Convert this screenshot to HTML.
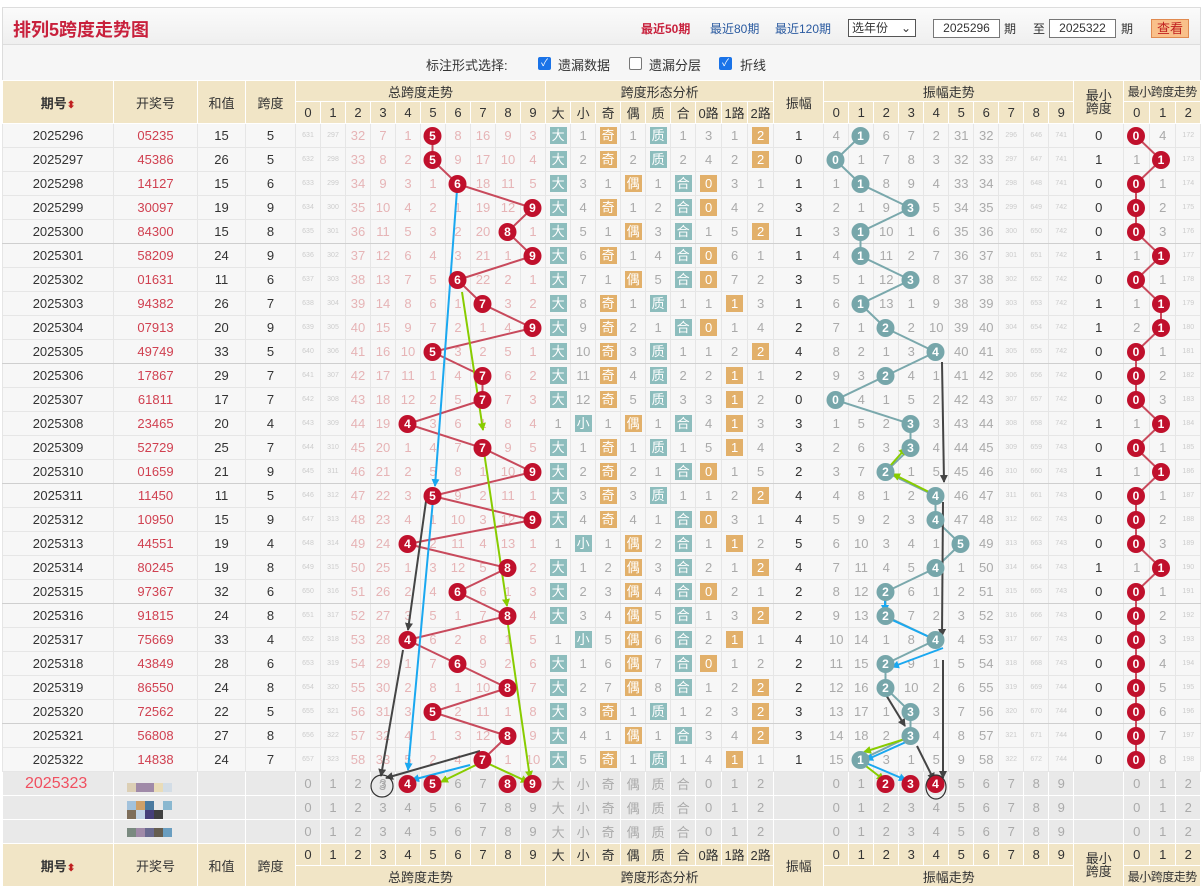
<!DOCTYPE html>
<html><head><meta charset="utf-8">
<style>
*{margin:0;padding:0;box-sizing:border-box}
body{width:1203px;height:892px;overflow:hidden;background:#fff;font-family:"Liberation Sans","Noto Sans CJK SC",sans-serif;font-size:13px;color:#333;position:relative}
#top{position:absolute;left:2px;top:7px;width:1199px;height:38px;background:linear-gradient(#fbfbfb,#efefef);border:1px solid #ddd}
#title{position:absolute;left:10px;top:8px;font-size:18px;font-weight:bold;color:#c8203c}
#ctl{position:absolute;top:12px;font-size:12px}
#opt{position:absolute;left:2px;top:45px;width:1199px;height:36px;background:#f6f6f6;border-left:1px solid #ddd;border-right:1px solid #ddd}
table{position:absolute;left:2px;top:80px;border-collapse:collapse;table-layout:fixed;width:1198px}
td{padding:0;text-align:center;height:24px;border:1px solid #e6e6e6;background:#f7f7f7;white-space:nowrap;overflow:hidden;color:#aaa;font-size:13px}
tr.h td{background:#f1e5c6;color:#333;border:1px solid #fff;height:21px}
tr.h2 td{height:22px}
td.k{color:#333}td.r{color:#d04050}
td.p{color:#e6b4b6}
td.t{font-size:7px;color:#ccc}
td.sm{font-size:12px;letter-spacing:-0.5px}
tr.s td{border-bottom:1px solid #cfcfcf}
tr.pr td{background:#e9e9e9;color:#aaa;border-color:#fff}
.T,.O{display:inline-block;width:17px;height:17px;line-height:17px;color:#fff;font-size:13px;vertical-align:middle}
.T{background:#8dbdbd}.O{background:#e2b06a}
svg{position:absolute;left:0;top:0}
svg text{font-family:"Liberation Sans",sans-serif;font-weight:bold;font-size:12px;fill:#fff;text-anchor:middle}
.mz{position:absolute;width:9px;height:9px}
</style></head><body>
<div id="top"><div id="title">排列5跨度走势图</div>
<div id="ctl" style="left:638px;color:#c8203c;font-weight:bold">最近50期</div>
<div id="ctl" style="left:707px;color:#2a5aa0">最近80期</div>
<div id="ctl" style="left:772px;color:#2a5aa0">最近120期</div>
<div style="position:absolute;left:845px;top:11px;width:68px;height:18px;border:1px solid #555;background:#fff;font-size:12px;padding-left:3px;line-height:16px">选年份 <span style="position:absolute;right:4px">⌄</span></div>
<div style="position:absolute;left:930px;top:11px;width:67px;height:19px;border:1px solid #777;background:#fff;font-size:12px;text-align:center;line-height:17px">2025296</div>
<div id="ctl" style="left:1001px">期</div><div id="ctl" style="left:1030px">至</div>
<div style="position:absolute;left:1046px;top:11px;width:67px;height:19px;border:1px solid #777;background:#fff;font-size:12px;text-align:center;line-height:17px">2025322</div>
<div id="ctl" style="left:1118px">期</div>
<div style="position:absolute;left:1148px;top:11px;width:38px;height:19px;border:1px solid #e08a50;background:#f9c08a;color:#c02020;font-size:13px;text-align:center;line-height:17px">查看</div>
</div>
<div id="opt"><span style="position:absolute;left:423px;top:10px">标注形式选择:</span>
<span style="position:absolute;left:535px;top:12px;width:13px;height:13px;background:#1a73e8;border-radius:2px;color:#fff;font-size:10px;line-height:13px;text-align:center">✓</span><span style="position:absolute;left:555px;top:10px">遗漏数据</span>
<span style="position:absolute;left:626px;top:12px;width:13px;height:13px;border:1px solid #777;border-radius:2px;background:#fff"></span><span style="position:absolute;left:646px;top:10px">遗漏分层</span>
<span style="position:absolute;left:716px;top:12px;width:13px;height:13px;background:#1a73e8;border-radius:2px;color:#fff;font-size:10px;line-height:13px;text-align:center">✓</span><span style="position:absolute;left:737px;top:10px">折线</span></div>
<table>
<colgroup><col style="width:111px"><col style="width:84px"><col style="width:48px"><col style="width:50px">
<col style="width:25px"><col style="width:25px"><col style="width:25px"><col style="width:25px"><col style="width:25px"><col style="width:25px"><col style="width:25px"><col style="width:25px"><col style="width:25px"><col style="width:25px">
<col style="width:25px"><col style="width:25px"><col style="width:25px"><col style="width:25px"><col style="width:25px"><col style="width:25px"><col style="width:26px"><col style="width:26px"><col style="width:26px">
<col style="width:50px">
<col style="width:25px"><col style="width:25px"><col style="width:25px"><col style="width:25px"><col style="width:25px"><col style="width:25px"><col style="width:25px"><col style="width:25px"><col style="width:25px"><col style="width:25px">
<col style="width:50px"><col style="width:26px"><col style="width:26px"><col style="width:25px"></colgroup>
<tr class="h"><td rowspan="2" style="font-weight:bold">期号<span style="color:#c02020;font-size:10px">⬍</span></td><td rowspan="2">开奖号</td><td rowspan="2">和值</td><td rowspan="2">跨度</td><td colspan="10">总跨度走势</td><td colspan="9">跨度形态分析</td><td rowspan="2">振幅</td><td colspan="10">振幅走势</td><td rowspan="2" style="line-height:13px">最小<br>跨度</td><td colspan="3" class="sm">最小跨度走势</td></tr>
<tr class="h h2"><td>0</td><td>1</td><td>2</td><td>3</td><td>4</td><td>5</td><td>6</td><td>7</td><td>8</td><td>9</td><td>大</td><td>小</td><td>奇</td><td>偶</td><td>质</td><td>合</td><td>0路</td><td>1路</td><td>2路</td><td>0</td><td>1</td><td>2</td><td>3</td><td>4</td><td>5</td><td>6</td><td>7</td><td>8</td><td>9</td><td>0</td><td>1</td><td>2</td></tr>

<tr><td class="k">2025296</td><td class="r">05235</td><td class="k">15</td><td class="k">5</td><td class="t">631</td><td class="t">297</td><td class="p">32</td><td class="p">7</td><td class="p">1</td><td></td><td class="p">8</td><td class="p">16</td><td class="p">9</td><td class="p">3</td><td><span class="T">大</span></td><td>1</td><td><span class="O">奇</span></td><td>1</td><td><span class="T">质</span></td><td>1</td><td>3</td><td>1</td><td><span class="O">2</span></td><td class="k">1</td><td>4</td><td></td><td>6</td><td>7</td><td>2</td><td>31</td><td>32</td><td class="t">296</td><td class="t">646</td><td class="t">741</td><td class="k">0</td><td></td><td>4</td><td class="t">172</td></tr>
<tr><td class="k">2025297</td><td class="r">45386</td><td class="k">26</td><td class="k">5</td><td class="t">632</td><td class="t">298</td><td class="p">33</td><td class="p">8</td><td class="p">2</td><td></td><td class="p">9</td><td class="p">17</td><td class="p">10</td><td class="p">4</td><td><span class="T">大</span></td><td>2</td><td><span class="O">奇</span></td><td>2</td><td><span class="T">质</span></td><td>2</td><td>4</td><td>2</td><td><span class="O">2</span></td><td class="k">0</td><td></td><td>1</td><td>7</td><td>8</td><td>3</td><td>32</td><td>33</td><td class="t">297</td><td class="t">647</td><td class="t">741</td><td class="k">1</td><td>1</td><td></td><td class="t">173</td></tr>
<tr><td class="k">2025298</td><td class="r">14127</td><td class="k">15</td><td class="k">6</td><td class="t">633</td><td class="t">299</td><td class="p">34</td><td class="p">9</td><td class="p">3</td><td class="p">1</td><td></td><td class="p">18</td><td class="p">11</td><td class="p">5</td><td><span class="T">大</span></td><td>3</td><td>1</td><td><span class="O">偶</span></td><td>1</td><td><span class="T">合</span></td><td><span class="O">0</span></td><td>3</td><td>1</td><td class="k">1</td><td>1</td><td></td><td>8</td><td>9</td><td>4</td><td>33</td><td>34</td><td class="t">298</td><td class="t">648</td><td class="t">741</td><td class="k">0</td><td></td><td>1</td><td class="t">174</td></tr>
<tr><td class="k">2025299</td><td class="r">30097</td><td class="k">19</td><td class="k">9</td><td class="t">634</td><td class="t">300</td><td class="p">35</td><td class="p">10</td><td class="p">4</td><td class="p">2</td><td class="p">1</td><td class="p">19</td><td class="p">12</td><td></td><td><span class="T">大</span></td><td>4</td><td><span class="O">奇</span></td><td>1</td><td>2</td><td><span class="T">合</span></td><td><span class="O">0</span></td><td>4</td><td>2</td><td class="k">3</td><td>2</td><td>1</td><td>9</td><td></td><td>5</td><td>34</td><td>35</td><td class="t">299</td><td class="t">649</td><td class="t">742</td><td class="k">0</td><td></td><td>2</td><td class="t">175</td></tr>
<tr class="s"><td class="k">2025300</td><td class="r">84300</td><td class="k">15</td><td class="k">8</td><td class="t">635</td><td class="t">301</td><td class="p">36</td><td class="p">11</td><td class="p">5</td><td class="p">3</td><td class="p">2</td><td class="p">20</td><td></td><td class="p">1</td><td><span class="T">大</span></td><td>5</td><td>1</td><td><span class="O">偶</span></td><td>3</td><td><span class="T">合</span></td><td>1</td><td>5</td><td><span class="O">2</span></td><td class="k">1</td><td>3</td><td></td><td>10</td><td>1</td><td>6</td><td>35</td><td>36</td><td class="t">300</td><td class="t">650</td><td class="t">742</td><td class="k">0</td><td></td><td>3</td><td class="t">176</td></tr>
<tr><td class="k">2025301</td><td class="r">58209</td><td class="k">24</td><td class="k">9</td><td class="t">636</td><td class="t">302</td><td class="p">37</td><td class="p">12</td><td class="p">6</td><td class="p">4</td><td class="p">3</td><td class="p">21</td><td class="p">1</td><td></td><td><span class="T">大</span></td><td>6</td><td><span class="O">奇</span></td><td>1</td><td>4</td><td><span class="T">合</span></td><td><span class="O">0</span></td><td>6</td><td>1</td><td class="k">1</td><td>4</td><td></td><td>11</td><td>2</td><td>7</td><td>36</td><td>37</td><td class="t">301</td><td class="t">651</td><td class="t">742</td><td class="k">1</td><td>1</td><td></td><td class="t">177</td></tr>
<tr><td class="k">2025302</td><td class="r">01631</td><td class="k">11</td><td class="k">6</td><td class="t">637</td><td class="t">303</td><td class="p">38</td><td class="p">13</td><td class="p">7</td><td class="p">5</td><td></td><td class="p">22</td><td class="p">2</td><td class="p">1</td><td><span class="T">大</span></td><td>7</td><td>1</td><td><span class="O">偶</span></td><td>5</td><td><span class="T">合</span></td><td><span class="O">0</span></td><td>7</td><td>2</td><td class="k">3</td><td>5</td><td>1</td><td>12</td><td></td><td>8</td><td>37</td><td>38</td><td class="t">302</td><td class="t">652</td><td class="t">742</td><td class="k">0</td><td></td><td>1</td><td class="t">178</td></tr>
<tr><td class="k">2025303</td><td class="r">94382</td><td class="k">26</td><td class="k">7</td><td class="t">638</td><td class="t">304</td><td class="p">39</td><td class="p">14</td><td class="p">8</td><td class="p">6</td><td class="p">1</td><td></td><td class="p">3</td><td class="p">2</td><td><span class="T">大</span></td><td>8</td><td><span class="O">奇</span></td><td>1</td><td><span class="T">质</span></td><td>1</td><td>1</td><td><span class="O">1</span></td><td>3</td><td class="k">1</td><td>6</td><td></td><td>13</td><td>1</td><td>9</td><td>38</td><td>39</td><td class="t">303</td><td class="t">653</td><td class="t">742</td><td class="k">1</td><td>1</td><td></td><td class="t">179</td></tr>
<tr><td class="k">2025304</td><td class="r">07913</td><td class="k">20</td><td class="k">9</td><td class="t">639</td><td class="t">305</td><td class="p">40</td><td class="p">15</td><td class="p">9</td><td class="p">7</td><td class="p">2</td><td class="p">1</td><td class="p">4</td><td></td><td><span class="T">大</span></td><td>9</td><td><span class="O">奇</span></td><td>2</td><td>1</td><td><span class="T">合</span></td><td><span class="O">0</span></td><td>1</td><td>4</td><td class="k">2</td><td>7</td><td>1</td><td></td><td>2</td><td>10</td><td>39</td><td>40</td><td class="t">304</td><td class="t">654</td><td class="t">742</td><td class="k">1</td><td>2</td><td></td><td class="t">180</td></tr>
<tr class="s"><td class="k">2025305</td><td class="r">49749</td><td class="k">33</td><td class="k">5</td><td class="t">640</td><td class="t">306</td><td class="p">41</td><td class="p">16</td><td class="p">10</td><td></td><td class="p">3</td><td class="p">2</td><td class="p">5</td><td class="p">1</td><td><span class="T">大</span></td><td>10</td><td><span class="O">奇</span></td><td>3</td><td><span class="T">质</span></td><td>1</td><td>1</td><td>2</td><td><span class="O">2</span></td><td class="k">4</td><td>8</td><td>2</td><td>1</td><td>3</td><td></td><td>40</td><td>41</td><td class="t">305</td><td class="t">655</td><td class="t">742</td><td class="k">0</td><td></td><td>1</td><td class="t">181</td></tr>
<tr><td class="k">2025306</td><td class="r">17867</td><td class="k">29</td><td class="k">7</td><td class="t">641</td><td class="t">307</td><td class="p">42</td><td class="p">17</td><td class="p">11</td><td class="p">1</td><td class="p">4</td><td></td><td class="p">6</td><td class="p">2</td><td><span class="T">大</span></td><td>11</td><td><span class="O">奇</span></td><td>4</td><td><span class="T">质</span></td><td>2</td><td>2</td><td><span class="O">1</span></td><td>1</td><td class="k">2</td><td>9</td><td>3</td><td></td><td>4</td><td>1</td><td>41</td><td>42</td><td class="t">306</td><td class="t">656</td><td class="t">742</td><td class="k">0</td><td></td><td>2</td><td class="t">182</td></tr>
<tr><td class="k">2025307</td><td class="r">61811</td><td class="k">17</td><td class="k">7</td><td class="t">642</td><td class="t">308</td><td class="p">43</td><td class="p">18</td><td class="p">12</td><td class="p">2</td><td class="p">5</td><td></td><td class="p">7</td><td class="p">3</td><td><span class="T">大</span></td><td>12</td><td><span class="O">奇</span></td><td>5</td><td><span class="T">质</span></td><td>3</td><td>3</td><td><span class="O">1</span></td><td>2</td><td class="k">0</td><td></td><td>4</td><td>1</td><td>5</td><td>2</td><td>42</td><td>43</td><td class="t">307</td><td class="t">657</td><td class="t">742</td><td class="k">0</td><td></td><td>3</td><td class="t">183</td></tr>
<tr><td class="k">2025308</td><td class="r">23465</td><td class="k">20</td><td class="k">4</td><td class="t">643</td><td class="t">309</td><td class="p">44</td><td class="p">19</td><td></td><td class="p">3</td><td class="p">6</td><td class="p">1</td><td class="p">8</td><td class="p">4</td><td>1</td><td><span class="T">小</span></td><td>1</td><td><span class="O">偶</span></td><td>1</td><td><span class="T">合</span></td><td>4</td><td><span class="O">1</span></td><td>3</td><td class="k">3</td><td>1</td><td>5</td><td>2</td><td></td><td>3</td><td>43</td><td>44</td><td class="t">308</td><td class="t">658</td><td class="t">742</td><td class="k">1</td><td>1</td><td></td><td class="t">184</td></tr>
<tr><td class="k">2025309</td><td class="r">52729</td><td class="k">25</td><td class="k">7</td><td class="t">644</td><td class="t">310</td><td class="p">45</td><td class="p">20</td><td class="p">1</td><td class="p">4</td><td class="p">7</td><td></td><td class="p">9</td><td class="p">5</td><td><span class="T">大</span></td><td>1</td><td><span class="O">奇</span></td><td>1</td><td><span class="T">质</span></td><td>1</td><td>5</td><td><span class="O">1</span></td><td>4</td><td class="k">3</td><td>2</td><td>6</td><td>3</td><td></td><td>4</td><td>44</td><td>45</td><td class="t">309</td><td class="t">659</td><td class="t">743</td><td class="k">0</td><td></td><td>1</td><td class="t">185</td></tr>
<tr class="s"><td class="k">2025310</td><td class="r">01659</td><td class="k">21</td><td class="k">9</td><td class="t">645</td><td class="t">311</td><td class="p">46</td><td class="p">21</td><td class="p">2</td><td class="p">5</td><td class="p">8</td><td class="p">1</td><td class="p">10</td><td></td><td><span class="T">大</span></td><td>2</td><td><span class="O">奇</span></td><td>2</td><td>1</td><td><span class="T">合</span></td><td><span class="O">0</span></td><td>1</td><td>5</td><td class="k">2</td><td>3</td><td>7</td><td></td><td>1</td><td>5</td><td>45</td><td>46</td><td class="t">310</td><td class="t">660</td><td class="t">743</td><td class="k">1</td><td>1</td><td></td><td class="t">186</td></tr>
<tr><td class="k">2025311</td><td class="r">11450</td><td class="k">11</td><td class="k">5</td><td class="t">646</td><td class="t">312</td><td class="p">47</td><td class="p">22</td><td class="p">3</td><td></td><td class="p">9</td><td class="p">2</td><td class="p">11</td><td class="p">1</td><td><span class="T">大</span></td><td>3</td><td><span class="O">奇</span></td><td>3</td><td><span class="T">质</span></td><td>1</td><td>1</td><td>2</td><td><span class="O">2</span></td><td class="k">4</td><td>4</td><td>8</td><td>1</td><td>2</td><td></td><td>46</td><td>47</td><td class="t">311</td><td class="t">661</td><td class="t">743</td><td class="k">0</td><td></td><td>1</td><td class="t">187</td></tr>
<tr><td class="k">2025312</td><td class="r">10950</td><td class="k">15</td><td class="k">9</td><td class="t">647</td><td class="t">313</td><td class="p">48</td><td class="p">23</td><td class="p">4</td><td class="p">1</td><td class="p">10</td><td class="p">3</td><td class="p">12</td><td></td><td><span class="T">大</span></td><td>4</td><td><span class="O">奇</span></td><td>4</td><td>1</td><td><span class="T">合</span></td><td><span class="O">0</span></td><td>3</td><td>1</td><td class="k">4</td><td>5</td><td>9</td><td>2</td><td>3</td><td></td><td>47</td><td>48</td><td class="t">312</td><td class="t">662</td><td class="t">743</td><td class="k">0</td><td></td><td>2</td><td class="t">188</td></tr>
<tr><td class="k">2025313</td><td class="r">44551</td><td class="k">19</td><td class="k">4</td><td class="t">648</td><td class="t">314</td><td class="p">49</td><td class="p">24</td><td></td><td class="p">2</td><td class="p">11</td><td class="p">4</td><td class="p">13</td><td class="p">1</td><td>1</td><td><span class="T">小</span></td><td>1</td><td><span class="O">偶</span></td><td>2</td><td><span class="T">合</span></td><td>1</td><td><span class="O">1</span></td><td>2</td><td class="k">5</td><td>6</td><td>10</td><td>3</td><td>4</td><td>1</td><td></td><td>49</td><td class="t">313</td><td class="t">663</td><td class="t">743</td><td class="k">0</td><td></td><td>3</td><td class="t">189</td></tr>
<tr><td class="k">2025314</td><td class="r">80245</td><td class="k">19</td><td class="k">8</td><td class="t">649</td><td class="t">315</td><td class="p">50</td><td class="p">25</td><td class="p">1</td><td class="p">3</td><td class="p">12</td><td class="p">5</td><td></td><td class="p">2</td><td><span class="T">大</span></td><td>1</td><td>2</td><td><span class="O">偶</span></td><td>3</td><td><span class="T">合</span></td><td>2</td><td>1</td><td><span class="O">2</span></td><td class="k">4</td><td>7</td><td>11</td><td>4</td><td>5</td><td></td><td>1</td><td>50</td><td class="t">314</td><td class="t">664</td><td class="t">743</td><td class="k">1</td><td>1</td><td></td><td class="t">190</td></tr>
<tr class="s"><td class="k">2025315</td><td class="r">97367</td><td class="k">32</td><td class="k">6</td><td class="t">650</td><td class="t">316</td><td class="p">51</td><td class="p">26</td><td class="p">2</td><td class="p">4</td><td></td><td class="p">6</td><td class="p">1</td><td class="p">3</td><td><span class="T">大</span></td><td>2</td><td>3</td><td><span class="O">偶</span></td><td>4</td><td><span class="T">合</span></td><td><span class="O">0</span></td><td>2</td><td>1</td><td class="k">2</td><td>8</td><td>12</td><td></td><td>6</td><td>1</td><td>2</td><td>51</td><td class="t">315</td><td class="t">665</td><td class="t">743</td><td class="k">0</td><td></td><td>1</td><td class="t">191</td></tr>
<tr><td class="k">2025316</td><td class="r">91815</td><td class="k">24</td><td class="k">8</td><td class="t">651</td><td class="t">317</td><td class="p">52</td><td class="p">27</td><td class="p">3</td><td class="p">5</td><td class="p">1</td><td class="p">7</td><td></td><td class="p">4</td><td><span class="T">大</span></td><td>3</td><td>4</td><td><span class="O">偶</span></td><td>5</td><td><span class="T">合</span></td><td>1</td><td>3</td><td><span class="O">2</span></td><td class="k">2</td><td>9</td><td>13</td><td></td><td>7</td><td>2</td><td>3</td><td>52</td><td class="t">316</td><td class="t">666</td><td class="t">743</td><td class="k">0</td><td></td><td>2</td><td class="t">192</td></tr>
<tr><td class="k">2025317</td><td class="r">75669</td><td class="k">33</td><td class="k">4</td><td class="t">652</td><td class="t">318</td><td class="p">53</td><td class="p">28</td><td></td><td class="p">6</td><td class="p">2</td><td class="p">8</td><td class="p">1</td><td class="p">5</td><td>1</td><td><span class="T">小</span></td><td>5</td><td><span class="O">偶</span></td><td>6</td><td><span class="T">合</span></td><td>2</td><td><span class="O">1</span></td><td>1</td><td class="k">4</td><td>10</td><td>14</td><td>1</td><td>8</td><td></td><td>4</td><td>53</td><td class="t">317</td><td class="t">667</td><td class="t">743</td><td class="k">0</td><td></td><td>3</td><td class="t">193</td></tr>
<tr><td class="k">2025318</td><td class="r">43849</td><td class="k">28</td><td class="k">6</td><td class="t">653</td><td class="t">319</td><td class="p">54</td><td class="p">29</td><td class="p">1</td><td class="p">7</td><td></td><td class="p">9</td><td class="p">2</td><td class="p">6</td><td><span class="T">大</span></td><td>1</td><td>6</td><td><span class="O">偶</span></td><td>7</td><td><span class="T">合</span></td><td><span class="O">0</span></td><td>1</td><td>2</td><td class="k">2</td><td>11</td><td>15</td><td></td><td>9</td><td>1</td><td>5</td><td>54</td><td class="t">318</td><td class="t">668</td><td class="t">743</td><td class="k">0</td><td></td><td>4</td><td class="t">194</td></tr>
<tr><td class="k">2025319</td><td class="r">86550</td><td class="k">24</td><td class="k">8</td><td class="t">654</td><td class="t">320</td><td class="p">55</td><td class="p">30</td><td class="p">2</td><td class="p">8</td><td class="p">1</td><td class="p">10</td><td></td><td class="p">7</td><td><span class="T">大</span></td><td>2</td><td>7</td><td><span class="O">偶</span></td><td>8</td><td><span class="T">合</span></td><td>1</td><td>2</td><td><span class="O">2</span></td><td class="k">2</td><td>12</td><td>16</td><td></td><td>10</td><td>2</td><td>6</td><td>55</td><td class="t">319</td><td class="t">669</td><td class="t">744</td><td class="k">0</td><td></td><td>5</td><td class="t">195</td></tr>
<tr class="s"><td class="k">2025320</td><td class="r">72562</td><td class="k">22</td><td class="k">5</td><td class="t">655</td><td class="t">321</td><td class="p">56</td><td class="p">31</td><td class="p">3</td><td></td><td class="p">2</td><td class="p">11</td><td class="p">1</td><td class="p">8</td><td><span class="T">大</span></td><td>3</td><td><span class="O">奇</span></td><td>1</td><td><span class="T">质</span></td><td>1</td><td>2</td><td>3</td><td><span class="O">2</span></td><td class="k">3</td><td>13</td><td>17</td><td>1</td><td></td><td>3</td><td>7</td><td>56</td><td class="t">320</td><td class="t">670</td><td class="t">744</td><td class="k">0</td><td></td><td>6</td><td class="t">196</td></tr>
<tr><td class="k">2025321</td><td class="r">56808</td><td class="k">27</td><td class="k">8</td><td class="t">656</td><td class="t">322</td><td class="p">57</td><td class="p">32</td><td class="p">4</td><td class="p">1</td><td class="p">3</td><td class="p">12</td><td></td><td class="p">9</td><td><span class="T">大</span></td><td>4</td><td>1</td><td><span class="O">偶</span></td><td>1</td><td><span class="T">合</span></td><td>3</td><td>4</td><td><span class="O">2</span></td><td class="k">3</td><td>14</td><td>18</td><td>2</td><td></td><td>4</td><td>8</td><td>57</td><td class="t">321</td><td class="t">671</td><td class="t">744</td><td class="k">0</td><td></td><td>7</td><td class="t">197</td></tr>
<tr><td class="k">2025322</td><td class="r">14838</td><td class="k">24</td><td class="k">7</td><td class="t">657</td><td class="t">323</td><td class="p">58</td><td class="p">33</td><td class="p">5</td><td class="p">2</td><td class="p">4</td><td></td><td class="p">1</td><td class="p">10</td><td><span class="T">大</span></td><td>5</td><td><span class="O">奇</span></td><td>1</td><td><span class="T">质</span></td><td>1</td><td>4</td><td><span class="O">1</span></td><td>1</td><td class="k">1</td><td>15</td><td></td><td>3</td><td>1</td><td>5</td><td>9</td><td>58</td><td class="t">322</td><td class="t">672</td><td class="t">744</td><td class="k">0</td><td></td><td>8</td><td class="t">198</td></tr>

<tr class="pr"><td style="color:#f05060;font-size:16px;text-align:left;padding-left:22px">2025323</td><td></td><td></td><td></td><td>0</td><td>1</td><td>2</td><td>3</td><td></td><td></td><td>6</td><td>7</td><td></td><td></td><td>大</td><td>小</td><td>奇</td><td>偶</td><td>质</td><td>合</td><td>0</td><td>1</td><td>2</td><td></td><td>0</td><td>1</td><td></td><td></td><td></td><td>5</td><td>6</td><td>7</td><td>8</td><td>9</td><td></td><td>0</td><td>1</td><td>2</td></tr>
<tr class="pr"><td></td><td></td><td></td><td></td><td>0</td><td>1</td><td>2</td><td>3</td><td>4</td><td>5</td><td>6</td><td>7</td><td>8</td><td>9</td><td>大</td><td>小</td><td>奇</td><td>偶</td><td>质</td><td>合</td><td>0</td><td>1</td><td>2</td><td></td><td>0</td><td>1</td><td>2</td><td>3</td><td>4</td><td>5</td><td>6</td><td>7</td><td>8</td><td>9</td><td></td><td>0</td><td>1</td><td>2</td></tr>
<tr class="pr"><td></td><td></td><td></td><td></td><td>0</td><td>1</td><td>2</td><td>3</td><td>4</td><td>5</td><td>6</td><td>7</td><td>8</td><td>9</td><td>大</td><td>小</td><td>奇</td><td>偶</td><td>质</td><td>合</td><td>0</td><td>1</td><td>2</td><td></td><td>0</td><td>1</td><td>2</td><td>3</td><td>4</td><td>5</td><td>6</td><td>7</td><td>8</td><td>9</td><td></td><td>0</td><td>1</td><td>2</td></tr>

<tr class="h h2"><td rowspan="2" style="font-weight:bold">期号<span style="color:#c02020;font-size:10px">⬍</span></td><td rowspan="2">开奖号</td><td rowspan="2">和值</td><td rowspan="2">跨度</td><td>0</td><td>1</td><td>2</td><td>3</td><td>4</td><td>5</td><td>6</td><td>7</td><td>8</td><td>9</td><td>大</td><td>小</td><td>奇</td><td>偶</td><td>质</td><td>合</td><td>0路</td><td>1路</td><td>2路</td><td rowspan="2">振幅</td><td>0</td><td>1</td><td>2</td><td>3</td><td>4</td><td>5</td><td>6</td><td>7</td><td>8</td><td>9</td><td rowspan="2" style="line-height:13px">最小<br>跨度</td><td>0</td><td>1</td><td>2</td></tr>
<tr class="h"><td colspan="10">总跨度走势</td><td colspan="9">跨度形态分析</td><td colspan="10">振幅走势</td><td colspan="3" class="sm">最小跨度走势</td></tr>
</table>

<div class="mz" style="left:127px;top:783px;background:#dccfb5"></div><div class="mz" style="left:136px;top:783px;background:#a08aa8"></div><div class="mz" style="left:145px;top:783px;background:#a08aa8"></div><div class="mz" style="left:154px;top:783px;background:#e9dcb8"></div><div class="mz" style="left:163px;top:783px;background:#d3dde6"></div>
<div class="mz" style="left:127px;top:801px;background:#a2c2dc"></div><div class="mz" style="left:136px;top:801px;background:#cfa068"></div><div class="mz" style="left:145px;top:801px;background:#4a7aa0"></div><div class="mz" style="left:163px;top:801px;background:#8ab8d0"></div>
<div class="mz" style="left:127px;top:810px;background:#7e6e5a"></div><div class="mz" style="left:136px;top:810px;background:#c2d4e6"></div><div class="mz" style="left:145px;top:810px;background:#46407a"></div><div class="mz" style="left:154px;top:810px;background:#404040"></div>
<div class="mz" style="left:127px;top:828px;background:#7a8a80"></div><div class="mz" style="left:136px;top:828px;background:#a08aa8"></div><div class="mz" style="left:145px;top:828px;background:#6a6a90"></div><div class="mz" style="left:154px;top:828px;background:#665e50"></div><div class="mz" style="left:163px;top:828px;background:#6a9ec0"></div>

<svg width="1203" height="892">
<defs>
<marker id="ab" markerWidth="8" markerHeight="8" refX="7" refY="4" orient="auto" markerUnits="userSpaceOnUse"><path d="M0,0 L8,4 L0,8 Z" fill="#1aa8f0"/></marker>
<marker id="ag" markerWidth="8" markerHeight="8" refX="7" refY="4" orient="auto" markerUnits="userSpaceOnUse"><path d="M0,0 L8,4 L0,8 Z" fill="#88cc00"/></marker>
<marker id="ak" markerWidth="8" markerHeight="8" refX="7" refY="4" orient="auto" markerUnits="userSpaceOnUse"><path d="M0,0 L8,4 L0,8 Z" fill="#444"/></marker>
</defs>
<polyline fill="none" stroke="#c84a5c" stroke-width="2" points="432.5,136 432.5,160 457.5,184 532.5,208 507.5,232 532.5,256 457.5,280 482.5,304 532.5,328 432.5,352 482.5,376 482.5,400 407.5,424 482.5,448 532.5,472 432.5,496 532.5,520 407.5,544 507.5,568 457.5,592 507.5,616 407.5,640 457.5,664 507.5,688 432.5,712 507.5,736 482.5,760"/>
<polyline fill="none" stroke="#7aa8ac" stroke-width="2" points="860.5,136 835.5,160 860.5,184 910.5,208 860.5,232 860.5,256 910.5,280 860.5,304 885.5,328 935.5,352 885.5,376 835.5,400 910.5,424 910.5,448 885.5,472 935.5,496 935.5,520 960.5,544 935.5,568 885.5,592 885.5,616 935.5,640 885.5,664 885.5,688 910.5,712 910.5,736 860.5,760"/>
<polyline fill="none" stroke="#c84a5c" stroke-width="2" points="1136,136 1161,160 1136,184 1136,208 1136,232 1161,256 1136,280 1161,304 1161,328 1136,352 1136,376 1136,400 1161,424 1136,448 1161,472 1136,496 1136,520 1136,544 1161,568 1136,592 1136,616 1136,640 1136,664 1136,688 1136,712 1136,736 1136,760"/>
<g stroke-width="2" fill="none">
<line x1="457" y1="190" x2="435" y2="486" stroke="#1aa8f0" marker-end="url(#ab)"/>
<line x1="433" y1="500" x2="408" y2="770" stroke="#1aa8f0" marker-end="url(#ab)"/>
<line x1="462" y1="292" x2="483" y2="430" stroke="#88cc00" marker-end="url(#ag)"/>
<line x1="484" y1="452" x2="507" y2="606" stroke="#88cc00" marker-end="url(#ag)"/>
<line x1="508" y1="625" x2="530" y2="778" stroke="#88cc00" marker-end="url(#ag)"/>
<line x1="427" y1="494" x2="408" y2="630" stroke="#444" marker-end="url(#ak)"/>
<line x1="403" y1="650" x2="381" y2="776" stroke="#444" marker-end="url(#ak)"/>
<line x1="480" y1="751" x2="386" y2="778" stroke="#444" marker-end="url(#ak)"/>
<line x1="470" y1="765" x2="412" y2="780" stroke="#1aa8f0" marker-end="url(#ab)"/>
<line x1="478" y1="764" x2="441" y2="782" stroke="#88cc00" marker-end="url(#ag)"/>
<line x1="489" y1="764" x2="528" y2="782" stroke="#88cc00" marker-end="url(#ag)"/>
<line x1="942" y1="362" x2="944" y2="482" stroke="#444" marker-end="url(#ak)"/>
<line x1="933" y1="494" x2="893" y2="474" stroke="#88cc00" marker-end="url(#ag)"/>
<line x1="890" y1="466" x2="906" y2="448" stroke="#88cc00" marker-end="url(#ag)"/>
<line x1="943" y1="502" x2="942" y2="636" stroke="#444" marker-end="url(#ak)"/>
<line x1="885" y1="596" x2="885" y2="612" stroke="#1aa8f0" marker-end="url(#ab)"/>
<line x1="890" y1="619" x2="936" y2="640" stroke="#1aa8f0" marker-end="url(#ab)"/>
<line x1="943" y1="648" x2="892" y2="667" stroke="#1aa8f0" marker-end="url(#ab)"/>
<line x1="943" y1="660" x2="943" y2="778" stroke="#444" marker-end="url(#ak)"/>
<line x1="883" y1="690" x2="905" y2="726" stroke="#444" marker-end="url(#ak)"/>
<line x1="908" y1="738" x2="864" y2="752" stroke="#88cc00" marker-end="url(#ag)"/>
<line x1="906" y1="742" x2="866" y2="760" stroke="#1aa8f0" marker-end="url(#ab)"/>
<line x1="862" y1="763" x2="884" y2="780" stroke="#88cc00" marker-end="url(#ag)"/>
<line x1="866" y1="763" x2="906" y2="780" stroke="#1aa8f0" marker-end="url(#ab)"/>
<line x1="917" y1="746" x2="934" y2="780" stroke="#444" marker-end="url(#ak)"/>
</g>
<g fill="#c0102c">
<circle cx="432.5" cy="136" r="9"/><circle cx="432.5" cy="160" r="9"/><circle cx="457.5" cy="184" r="9"/><circle cx="532.5" cy="208" r="9"/><circle cx="507.5" cy="232" r="9"/><circle cx="532.5" cy="256" r="9"/><circle cx="457.5" cy="280" r="9"/><circle cx="482.5" cy="304" r="9"/><circle cx="532.5" cy="328" r="9"/><circle cx="432.5" cy="352" r="9"/><circle cx="482.5" cy="376" r="9"/><circle cx="482.5" cy="400" r="9"/><circle cx="407.5" cy="424" r="9"/><circle cx="482.5" cy="448" r="9"/><circle cx="532.5" cy="472" r="9"/><circle cx="432.5" cy="496" r="9"/><circle cx="532.5" cy="520" r="9"/><circle cx="407.5" cy="544" r="9"/><circle cx="507.5" cy="568" r="9"/><circle cx="457.5" cy="592" r="9"/><circle cx="507.5" cy="616" r="9"/><circle cx="407.5" cy="640" r="9"/><circle cx="457.5" cy="664" r="9"/><circle cx="507.5" cy="688" r="9"/><circle cx="432.5" cy="712" r="9"/><circle cx="507.5" cy="736" r="9"/><circle cx="482.5" cy="760" r="9"/>
<circle cx="407.5" cy="784" r="9"/><circle cx="432.5" cy="784" r="9"/><circle cx="507.5" cy="784" r="9"/><circle cx="532.5" cy="784" r="9"/>
<circle cx="885.5" cy="784" r="9"/><circle cx="910.5" cy="784" r="9"/><circle cx="935.5" cy="784" r="9"/>
<circle cx="1136" cy="136" r="9"/><circle cx="1161" cy="160" r="9"/><circle cx="1136" cy="184" r="9"/><circle cx="1136" cy="208" r="9"/><circle cx="1136" cy="232" r="9"/><circle cx="1161" cy="256" r="9"/><circle cx="1136" cy="280" r="9"/><circle cx="1161" cy="304" r="9"/><circle cx="1161" cy="328" r="9"/><circle cx="1136" cy="352" r="9"/><circle cx="1136" cy="376" r="9"/><circle cx="1136" cy="400" r="9"/><circle cx="1161" cy="424" r="9"/><circle cx="1136" cy="448" r="9"/><circle cx="1161" cy="472" r="9"/><circle cx="1136" cy="496" r="9"/><circle cx="1136" cy="520" r="9"/><circle cx="1136" cy="544" r="9"/><circle cx="1161" cy="568" r="9"/><circle cx="1136" cy="592" r="9"/><circle cx="1136" cy="616" r="9"/><circle cx="1136" cy="640" r="9"/><circle cx="1136" cy="664" r="9"/><circle cx="1136" cy="688" r="9"/><circle cx="1136" cy="712" r="9"/><circle cx="1136" cy="736" r="9"/><circle cx="1136" cy="760" r="9"/>
</g>
<g fill="#76a6aa">
<circle cx="860.5" cy="136" r="9"/><circle cx="835.5" cy="160" r="9"/><circle cx="860.5" cy="184" r="9"/><circle cx="910.5" cy="208" r="9"/><circle cx="860.5" cy="232" r="9"/><circle cx="860.5" cy="256" r="9"/><circle cx="910.5" cy="280" r="9"/><circle cx="860.5" cy="304" r="9"/><circle cx="885.5" cy="328" r="9"/><circle cx="935.5" cy="352" r="9"/><circle cx="885.5" cy="376" r="9"/><circle cx="835.5" cy="400" r="9"/><circle cx="910.5" cy="424" r="9"/><circle cx="910.5" cy="448" r="9"/><circle cx="885.5" cy="472" r="9"/><circle cx="935.5" cy="496" r="9"/><circle cx="935.5" cy="520" r="9"/><circle cx="960.5" cy="544" r="9"/><circle cx="935.5" cy="568" r="9"/><circle cx="885.5" cy="592" r="9"/><circle cx="885.5" cy="616" r="9"/><circle cx="935.5" cy="640" r="9"/><circle cx="885.5" cy="664" r="9"/><circle cx="885.5" cy="688" r="9"/><circle cx="910.5" cy="712" r="9"/><circle cx="910.5" cy="736" r="9"/><circle cx="860.5" cy="760" r="9"/>
</g>
<circle cx="382" cy="786" r="11" fill="none" stroke="#333" stroke-width="1.2"/>
<ellipse cx="936" cy="787" rx="10" ry="12" fill="none" stroke="#333" stroke-width="1.2"/>
<text x="382.5" y="790" style="fill:#aaa;font-weight:normal;font-size:13px">3</text>
<g>
<text x="432.5" y="140">5</text><text x="432.5" y="164">5</text><text x="457.5" y="188">6</text><text x="532.5" y="212">9</text><text x="507.5" y="236">8</text><text x="532.5" y="260">9</text><text x="457.5" y="284">6</text><text x="482.5" y="308">7</text><text x="532.5" y="332">9</text><text x="432.5" y="356">5</text><text x="482.5" y="380">7</text><text x="482.5" y="404">7</text><text x="407.5" y="428">4</text><text x="482.5" y="452">7</text><text x="532.5" y="476">9</text><text x="432.5" y="500">5</text><text x="532.5" y="524">9</text><text x="407.5" y="548">4</text><text x="507.5" y="572">8</text><text x="457.5" y="596">6</text><text x="507.5" y="620">8</text><text x="407.5" y="644">4</text><text x="457.5" y="668">6</text><text x="507.5" y="692">8</text><text x="432.5" y="716">5</text><text x="507.5" y="740">8</text><text x="482.5" y="764">7</text>
<text x="407.5" y="788">4</text><text x="432.5" y="788">5</text><text x="507.5" y="788">8</text><text x="532.5" y="788">9</text>
<text x="885.5" y="788">2</text><text x="910.5" y="788">3</text><text x="935.5" y="788">4</text>
<text x="860.5" y="140">1</text><text x="835.5" y="164">0</text><text x="860.5" y="188">1</text><text x="910.5" y="212">3</text><text x="860.5" y="236">1</text><text x="860.5" y="260">1</text><text x="910.5" y="284">3</text><text x="860.5" y="308">1</text><text x="885.5" y="332">2</text><text x="935.5" y="356">4</text><text x="885.5" y="380">2</text><text x="835.5" y="404">0</text><text x="910.5" y="428">3</text><text x="910.5" y="452">3</text><text x="885.5" y="476">2</text><text x="935.5" y="500">4</text><text x="935.5" y="524">4</text><text x="960.5" y="548">5</text><text x="935.5" y="572">4</text><text x="885.5" y="596">2</text><text x="885.5" y="620">2</text><text x="935.5" y="644">4</text><text x="885.5" y="668">2</text><text x="885.5" y="692">2</text><text x="910.5" y="716">3</text><text x="910.5" y="740">3</text><text x="860.5" y="764">1</text>
<text x="1136" y="140">0</text><text x="1161" y="164">1</text><text x="1136" y="188">0</text><text x="1136" y="212">0</text><text x="1136" y="236">0</text><text x="1161" y="260">1</text><text x="1136" y="284">0</text><text x="1161" y="308">1</text><text x="1161" y="332">1</text><text x="1136" y="356">0</text><text x="1136" y="380">0</text><text x="1136" y="404">0</text><text x="1161" y="428">1</text><text x="1136" y="452">0</text><text x="1161" y="476">1</text><text x="1136" y="500">0</text><text x="1136" y="524">0</text><text x="1136" y="548">0</text><text x="1161" y="572">1</text><text x="1136" y="596">0</text><text x="1136" y="620">0</text><text x="1136" y="644">0</text><text x="1136" y="668">0</text><text x="1136" y="692">0</text><text x="1136" y="716">0</text><text x="1136" y="740">0</text><text x="1136" y="764">0</text>
</g>
</svg>
</body></html>
